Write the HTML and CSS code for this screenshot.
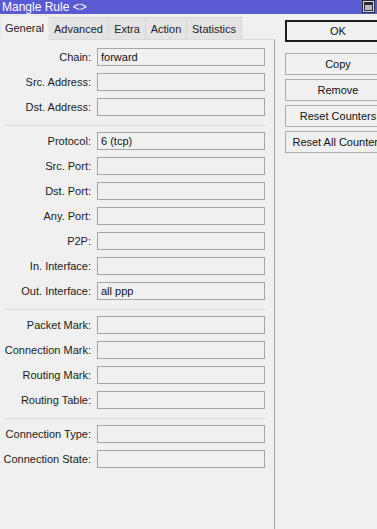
FILE: index.html
```html
<!DOCTYPE html>
<html>
<head>
<meta charset="utf-8">
<link rel="stylesheet" href="styles.css">
</head>
<body>
<div class="titlebar">
  <span class="title">Mangle Rule &lt;&gt;</span>
  <svg class="maxicon" width="13" height="13" viewBox="0 0 13 13">
    <rect x="0.5" y="0.5" width="12" height="12" fill="#d8d8e8" stroke="#2a2a3a"/>
    <rect x="2.5" y="2.5" width="8" height="8" fill="#bcbcc4" stroke="#2a2a3a"/>
    <rect x="3" y="3" width="7" height="2" fill="#2a2a3a"/>
  </svg>
</div>
<div class="main">
  <div class="left">
    <div class="tabs">
      <div class="tab active w-general">General</div>
      <div class="tab w-advanced">Advanced</div>
      <div class="tab w-extra">Extra</div>
      <div class="tab w-action">Action</div>
      <div class="tab w-stats">Statistics</div>
    </div>
    <div class="panel">
      <div class="group">
        <div class="row"><label>Chain:</label><div class="field">forward</div></div>
        <div class="row"><label>Src. Address:</label><div class="field"></div></div>
        <div class="row"><label>Dst. Address:</label><div class="field"></div></div>
      </div>
      <div class="sep"></div>
      <div class="group">
        <div class="row"><label>Protocol:</label><div class="field">6 (tcp)</div></div>
        <div class="row"><label>Src. Port:</label><div class="field"></div></div>
        <div class="row"><label>Dst. Port:</label><div class="field"></div></div>
        <div class="row"><label>Any. Port:</label><div class="field"></div></div>
        <div class="row"><label>P2P:</label><div class="field"></div></div>
        <div class="row"><label>In. Interface:</label><div class="field"></div></div>
        <div class="row"><label>Out. Interface:</label><div class="field">all ppp</div></div>
      </div>
      <div class="sep"></div>
      <div class="group">
        <div class="row"><label>Packet Mark:</label><div class="field"></div></div>
        <div class="row"><label>Connection Mark:</label><div class="field"></div></div>
        <div class="row"><label>Routing Mark:</label><div class="field"></div></div>
        <div class="row"><label>Routing Table:</label><div class="field"></div></div>
      </div>
      <div class="sep"></div>
      <div class="group">
        <div class="row"><label>Connection Type:</label><div class="field"></div></div>
        <div class="row"><label>Connection State:</label><div class="field"></div></div>
      </div>
    </div>
  </div>
  <div class="right">
    <button class="btn default">OK</button>
    <div class="btnlist">
      <button class="btn">Copy</button>
      <button class="btn">Remove</button>
      <button class="btn">Reset Counters</button>
      <button class="btn">Reset All Counters</button>
    </div>
  </div>
</div>
</body>
</html>
```
FILE: styles.css
```css
html, body {
  margin: 0;
  padding: 0;
  width: 377px;
  height: 529px;
  overflow: hidden;
  background: #f0f0f0;
  font-family: "Liberation Sans", Arial, sans-serif;
  font-size: 11px;
  color: #111;
}

.titlebar {
  height: 14px;
  background: #5a5ad2;
  color: #fff;
  display: flex;
  align-items: flex-start;
  justify-content: space-between;
  padding-left: 2px;
  padding-right: 2px;
}

.title {
  font-size: 12px;
  line-height: 14px;
}

.maxicon {
  display: block;
}

.main {
  display: flex;
  height: 515px;
}

.left {
  width: 275px;
  flex-shrink: 0;
  display: flex;
  flex-direction: column;
}

.tabs {
  display: flex;
  height: 24px;
  margin-top: 1px;
  align-items: flex-end;
}

.tab {
  box-sizing: border-box;
  height: 22px;
  background: #e4e4e4;
  border: 1px solid #d6d6d6;
  border-bottom: none;
  margin-left: -1px;
  display: flex;
  align-items: center;
  justify-content: center;
  font-size: 11px;
  color: #222;
}

.tab.active {
  background: #f0f0f0;
  border-color: #e6e6e6;
  margin-left: 0;
  position: relative;
  z-index: 1;
  margin-bottom: -1px;
  height: 25px;
}

.w-general { width: 49px; }
.w-advanced { width: 61px; }
.w-extra { width: 38px; }
.w-action { width: 42px; }
.w-stats { width: 56px; }

.panel {
  flex: 1;
  border-top: 1px solid #dadada;
  border-right: 1px solid #a3a3a3;
  padding-top: 8px;
  display: flex;
  flex-direction: column;
}

.group {
  display: flex;
  flex-direction: column;
  gap: 7px;
}

.row {
  display: grid;
  grid-template-columns: 91px 168px;
  column-gap: 6px;
  height: 18px;
  align-items: center;
}

.row label {
  text-align: right;
  white-space: nowrap;
  color: #1a1a1a;
}

.field {
  box-sizing: border-box;
  height: 18px;
  border: 1px solid #a5a5a5;
  background: #f0f0f0;
  padding-left: 3px;
  line-height: 16px;
  color: #111;
}

.sep {
  height: 1px;
  background: #d6d6d6;
  margin: 9px 9px 6px 5px;
}

.right {
  margin-left: 10px;
  flex-shrink: 0;
  display: flex;
  flex-direction: column;
  padding-top: 6px;
}

.btn {
  box-sizing: border-box;
  width: 106px;
  height: 22px;
  border: 1px solid #adadad;
  background: #f0f0f0;
  font-family: "Liberation Sans", Arial, sans-serif;
  font-size: 11px;
  color: #111;
  padding: 0;
  margin: 0;
  white-space: nowrap;
  overflow: hidden;
}

.btn.default {
  border: 2px solid #1c1c1c;
}

.btnlist {
  margin-top: 11px;
  display: flex;
  flex-direction: column;
  gap: 4px;
}
```
